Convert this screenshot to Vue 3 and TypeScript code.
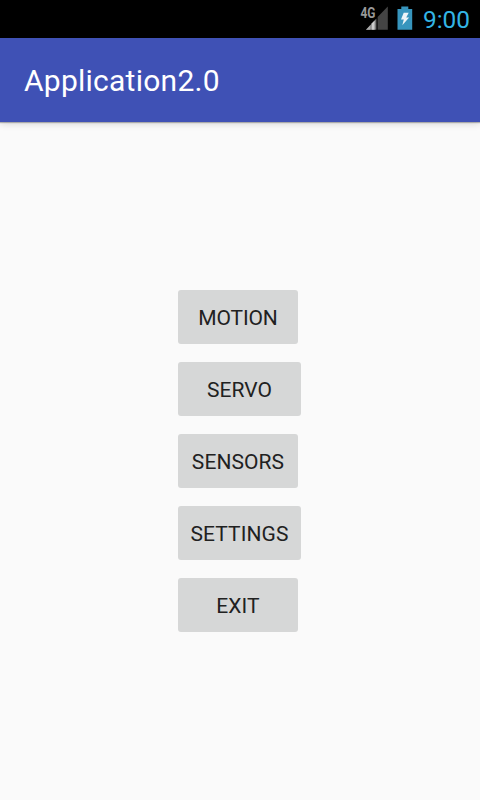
<script setup lang="ts">
const actions: { label: string; wide: boolean; tight?: boolean }[] = [
  { label: 'MOTION', wide: false, tight: true },
  { label: 'SERVO', wide: true },
  { label: 'SENSORS', wide: false },
  { label: 'SETTINGS', wide: true },
  { label: 'EXIT', wide: false },
]
</script>

<template>
  <div class="screen">
    <div class="status">
      <svg class="signal" width="30" height="28" viewBox="-2 -2 30 28">
        <path d="M27.8 .5V23.7H17.6V10.9Z" fill="#444" />
        <path d="M16.4 12.4V23.7H6Z" fill="#777" />
        <path d="M10.5 19V23.7H6Z" fill="#aaa" />
        <path d="M11.6 17.5L14.6 14.4V23.7H11.6Z" fill="#ccc" />
        <text x="0.4" y="11.6" class="network" textLength="15" lengthAdjust="spacingAndGlyphs">4G</text>
      </svg>
      <svg class="battery" width="16" height="24" viewBox="0 0 16 24">
        <path d="M4.3 .6h7v2.5h3.9v20.7H.5V3.1h3.8z" fill="#3795bd" />
        <path d="M6.7 6.8h5L9.2 11.6h2.9L5.3 19.3l1.5-5.8H4z" fill="#eef5f8" />
      </svg>
      <span class="clock">9:00</span>
    </div>
    <header class="bar"><h1>Application2.0</h1></header>
    <main class="menu">
      <button v-for="a in actions" :key="a.label" type="button" :class="{ wide: a.wide, tight: a.tight }">{{ a.label }}</button>
    </main>
  </div>
</template>

<style>
body { margin: 0; background: #fafafa; }
</style>

<style scoped>
.screen { width: 480px; height: 800px; overflow: hidden; display: flex; flex-direction: column; background: #fafafa; font-family: Roboto, sans-serif; }
.status { height: 38px; flex: none; box-sizing: border-box; padding: 0 10px 2px 0; background: #000; display: flex; align-items: center; justify-content: flex-end; }
.signal { margin-right: 9px; overflow: visible; }
.network { font: bold 14.5px Roboto, sans-serif; fill: #999; }
.battery { margin-right: 10px; }
.clock { color: #33b5e5; font-size: 24.4px; line-height: 34px; padding-top: 4px; }
.bar { height: 84px; flex: none; box-sizing: border-box; display: flex; align-items: center; padding: 2px 0 0 24px; background: #3f51b5; box-shadow: 0 1px 1px rgba(0,0,0,.25), 0 2px 7px rgba(0,0,0,.14); }
h1 { margin: 0; color: #fff; font-size: 30px; font-weight: 400; line-height: 36px; letter-spacing: .25px; }
.menu { padding: 168px 0 0 178px; display: flex; flex-direction: column; align-items: flex-start; gap: 18px; }
button { width: 120px; height: 54px; padding: 2px 0 0; border: 0; border-radius: 3px; background: #d6d7d7; color: #212121; font: 400 21px Roboto, sans-serif; letter-spacing: .08px; }
button.wide { width: 123px; }
button.tight { letter-spacing: -.15px; }
</style>
